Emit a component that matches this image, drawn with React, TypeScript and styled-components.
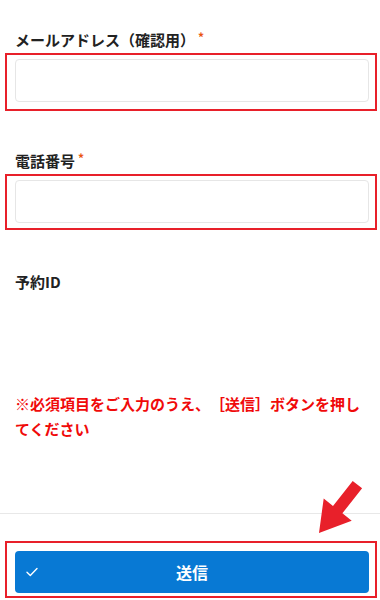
import React from "react";
import styled, { createGlobalStyle } from "styled-components";

const GlobalStyle = createGlobalStyle`
  html, body {
    margin: 0;
    padding: 0;
    background: #ffffff;
  }
  body {
    font-family: "Noto Sans CJK JP", "Noto Sans", sans-serif;
    color: #222222;
    text-spacing-trim: space-all;
  }
`;

const Page = styled.div`
  position: relative;
  width: 380px;
  height: 600px;
  overflow: hidden;
  background: #fff;
`;

const Form = styled.div`
  display: flex;
  flex-direction: column;
  padding: 29px 11px 0 15px;
`;

const Label = styled.div<{ $gap?: number }>`
  font-size: 15px;
  font-weight: 700;
  line-height: 22px;
  margin-top: ${(p) => p.$gap ?? 0}px;
  margin-bottom: 2px;
  color: #222;
`;

const Required = styled.span`
  color: #ea5413;
  font-size: 12px;
  vertical-align: top;
  margin-left: 3px;
  line-height: 16px;
`;

// red annotation frame around a field
const Highlight = styled.div<{ $top?: number; $bottom?: number }>`
  margin: 0 -8px 0 -10px;
  border: 2px solid #e8202a;
  padding: ${(p) => p.$top ?? 4}px 6px ${(p) => p.$bottom ?? 6}px 8px;
`;

const Input = styled.div`
  height: 41px;
  border: 1px solid #e6e6e6;
  border-radius: 4px;
  background: #fff;
`;

const Notice = styled.div`
  margin-top: 96px;
  color: #f00a0a;
  font-size: 15px;
  font-weight: 700;
  line-height: 25px;
  padding-right: 0;
`;

const Footer = styled.div`
  position: absolute;
  left: 0;
  right: 0;
  top: 513px;
  border-top: 1px solid #e8e8e8;
  padding: 27px 3px 0 5px;
`;

const ButtonFrame = styled.div`
  border: 2px solid #e8202a;
  padding: 8px 6px 3px 8px;
`;

const SubmitButton = styled.button`
  position: relative;
  display: flex;
  align-items: center;
  justify-content: center;
  width: 100%;
  height: 42px;
  border: none;
  border-radius: 4px;
  background: #0879d4;
  color: #fff;
  font-family: "Noto Sans CJK JP", sans-serif;
  font-size: 16px;
  font-weight: 700;
  cursor: pointer;
`;

const CheckIcon = styled.svg`
  position: absolute;
  left: 11px;
  top: 16px;
`;

const Arrow = styled.svg`
  position: absolute;
  left: 0;
  top: 0;
  pointer-events: none;
`;

export default function App() {
  return (
    <Page>
      <GlobalStyle />
      <Form>
        <Label>
          メールアドレス（確認用）<Required>*</Required>
        </Label>
        <Highlight $top={4} $bottom={7}>
          <Input />
        </Highlight>

        <Label $gap={39}>
          電話番号<Required>*</Required>
        </Label>
        <Highlight $top={4} $bottom={5}>
          <Input />
        </Highlight>

        <Label $gap={41}>予約ID</Label>

        <Notice>※必須項目をご入力のうえ、［送信］ボタンを押してください</Notice>
      </Form>

      <Footer>
        <ButtonFrame>
          <SubmitButton>
            <CheckIcon width="12" height="10" viewBox="0 0 12 10">
              <path
                d="M1 5.2 L4.3 8.4 L11 1.4"
                fill="none"
                stroke="#fff"
                strokeWidth="1.4"
                strokeLinecap="round"
                strokeLinejoin="round"
              />
            </CheckIcon>
            送信
          </SubmitButton>
        </ButtonFrame>
      </Footer>

      <Arrow width="380" height="600" viewBox="0 0 380 600">
        <polygon
          points="352.7,480.9 362.1,488.3 342.4,513.3 351.7,520.8 319,533 323.7,498.4 333,505.9"
          fill="#e8202a"
        />
      </Arrow>
    </Page>
  );
}
